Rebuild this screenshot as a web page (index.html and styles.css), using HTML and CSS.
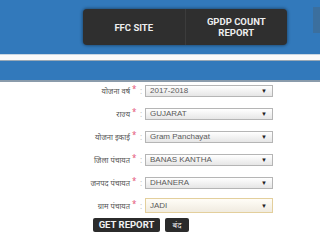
FILE: index.html
```html
<!DOCTYPE html>
<html>
<head>
<meta charset="utf-8">
<link rel="stylesheet" href="styles.css">
</head>
<body>
<div class="top">
  <div class="nav">
    <div class="nav-item">FFC SITE</div>
    <div class="nav-item sep">GPDP COUNT<br>REPORT</div>
  </div>
  <div class="nav-extra"></div>
</div>
<div class="stripe"></div>
<div class="band"></div>
<form class="form">
  <div class="row">
    <span class="lbl">योजना वर्ष</span><span class="star">*</span><span class="colon">:</span>
    <div class="sel"><span>2017-2018</span><span class="arr">▼</span></div>
  </div>
  <div class="row">
    <span class="lbl">राज्य</span><span class="star">*</span><span class="colon">:</span>
    <div class="sel"><span>GUJARAT</span><span class="arr">▼</span></div>
  </div>
  <div class="row">
    <span class="lbl">योजना इकाई</span><span class="star">*</span><span class="colon">:</span>
    <div class="sel"><span>Gram Panchayat</span><span class="arr">▼</span></div>
  </div>
  <div class="row">
    <span class="lbl">जिला पंचायत</span><span class="star">*</span><span class="colon">:</span>
    <div class="sel"><span>BANAS KANTHA</span><span class="arr">▼</span></div>
  </div>
  <div class="row">
    <span class="lbl">जनपद पंचायत</span><span class="star">*</span><span class="colon">:</span>
    <div class="sel"><span>DHANERA</span><span class="arr">▼</span></div>
  </div>
  <div class="row">
    <span class="lbl">ग्राम पंचायत</span><span class="star">*</span><span class="colon">:</span>
    <div class="sel focus"><span>JADI</span><span class="arr">▼</span></div>
  </div>
  <div class="btns">
    <span class="btn">GET REPORT</span>
    <span class="btn small">बंद</span>
  </div>
</form>
</body>
</html>
```
FILE: styles.css
```css
html, body {
  margin: 0;
  padding: 0;
  background: #fff;
  width: 320px;
  height: 242px;
  overflow: hidden;
}
.top {
  height: 54px;
  background: #3279bb;
  position: relative;
  display: flex;
  padding-left: 83px;
  padding-top: 9px;
  box-sizing: border-box;
}
.nav {
  display: flex;
  width: 204px;
  height: 36px;
  background: #2f2f2f;
  border-radius: 4px;
  box-shadow: 0 0 3px 1px rgba(0,0,0,0.35);
}
.nav-item {
  flex: 1;
  display: flex;
  align-items: center;
  justify-content: center;
  text-align: center;
  color: #eee;
  font-family: Roboto, "Liberation Sans", sans-serif;
  font-weight: bold;
  font-size: 9.5px;
  line-height: 11px;
}
.nav-item.sep {
  border-left: 1px solid #3c3c3c;
}
.nav-extra {
  position: absolute;
  left: 313px;
  top: 7px;
  width: 7px;
  height: 26px;
  background: #3b6f9e;
}
.stripe {
  height: 5px;
  background: #fafafa;
  border-top: 1px solid #c9d6e2;
  border-bottom: 1px solid #9aa9b6;
}
.band {
  height: 19px;
  background: #3279bb;
  border-bottom: 2px solid #8a9bab;
}
.form {
  margin: -3px 0 0 0;
  padding: 0;
  font-family: "Noto Sans", "Liberation Sans", sans-serif;
}
.row {
  display: flex;
  align-items: center;
  height: 23px;
}
.lbl {
  width: 130px;
  text-align: right;
  font-size: 7.5px;
  color: #555;
}
.star {
  width: 5px;
  color: #e4577a;
  font-size: 8px;
  align-self: flex-start;
  margin-top: 4px;
  padding-left: 2px;
}
.colon {
  width: 8px;
  font-size: 8px;
  color: #bbb;
  text-align: center;
}
.sel {
  width: 128px;
  height: 12px;
  box-sizing: border-box;
  border: 1px solid #b5b5b5;
  background: linear-gradient(#ffffff, #e6e6e6);
  display: flex;
  align-items: center;
  justify-content: space-between;
  padding: 0 5px 0 4px;
  font-family: "Liberation Sans", Arial, sans-serif;
  font-size: 8px;
  color: #5a5a5a;
}
.sel.focus {
  height: 15px;
  border-color: #e3cf9c;
  background: linear-gradient(#fffdf7, #f0ebe0);
}
.arr {
  font-size: 6px;
  color: #222;
}
.btns {
  display: flex;
  gap: 5px;
  padding-left: 93px;
  margin-top: 1px;
}
.btn {
  background: #2b2b2b;
  color: #f2f2f2;
  font-family: Roboto, "Liberation Sans", sans-serif;
  font-weight: bold;
  font-size: 9.5px;
  height: 14px;
  line-height: 14px;
  width: 67px;
  text-align: center;
  border-radius: 2px;
}
.btn.small {
  width: 24px;
  font-family: "Noto Sans", sans-serif;
  font-weight: normal;
  font-size: 8px;
}
```
